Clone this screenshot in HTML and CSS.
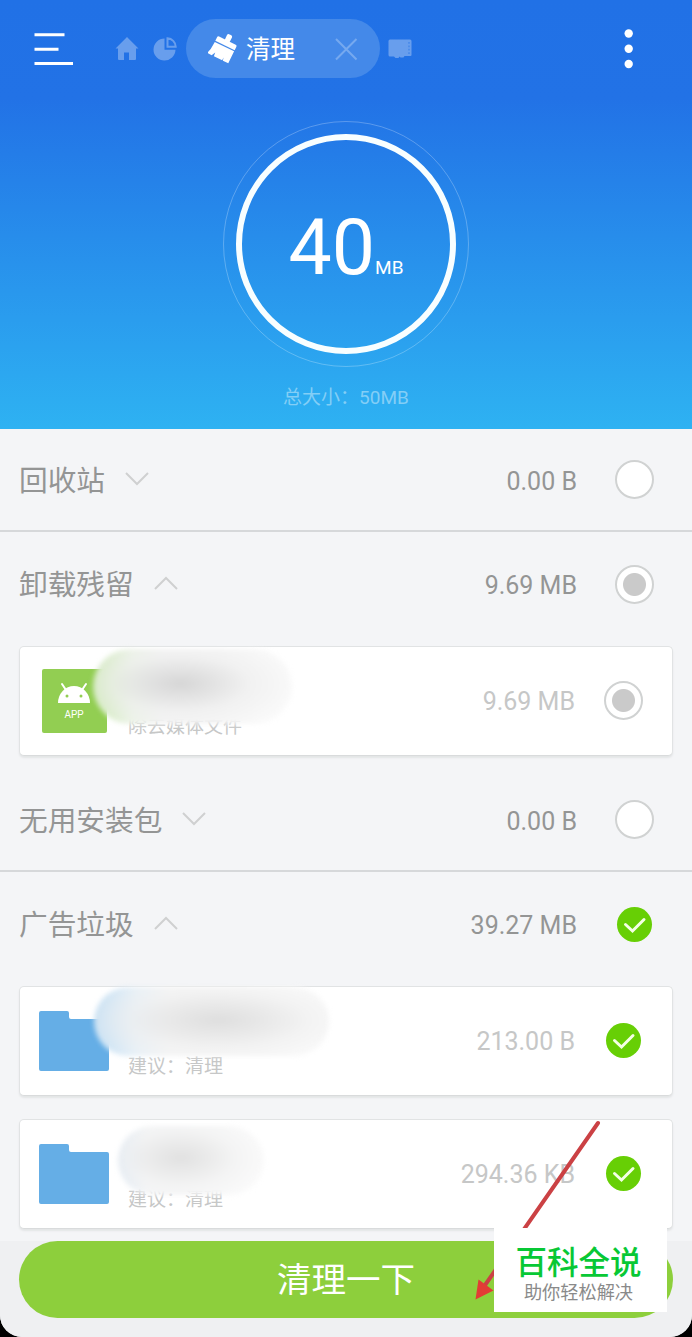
FILE: index.html
```html
<!DOCTYPE html>
<html lang="zh-CN">
<head>
    <meta charset="UTF-8">
    <meta name="viewport" content="width=device-width, initial-scale=1.0">
    <title>清理</title>
    <link rel="stylesheet" href="styles.css">
</head>
<body>
    <div class="app">
        <header class="header">
            <div class="toolbar">
                <svg class="menu-icon" width="40" height="34" viewBox="0 0 40 34">
                    <path d="M.5 2.800h30M.5 17.200h24M.5 31.500h38.500" stroke="#fff" stroke-width="3"/>
                </svg>

                <div class="tabs">
                    <svg class="tab-icon" width="24" height="24" viewBox="0 0 24 24">
                        <path d="M12 0L.5 11.500H3V22q0 1 1 1h5v-7.500h5V23h6q1 0 1-1V11.500h2.500z" fill="currentColor"/>
                    </svg>
                    <svg class="tab-icon" width="24" height="24" viewBox="0 0 24 24">
                        <path d="M11.500 1.500A11 11 0 1 0 22.500 12.800H11.500z" fill="currentColor"/>
                        <path d="M14.500 1.300v8.400h8.200A8.700 8.700 0 0 0 14.500 1.300z" fill="none" stroke="currentColor" stroke-width="2"/>
                    </svg>
                    <div class="tab-active">
                        <svg width="30" height="30" viewBox="0 0 30 30">
                            <g transform="rotate(26 15 15)" fill="#fff">
                                <rect x="12.500" y="-1" width="5.500" height="8" rx="2"/>
                                <path d="M6 5.500h18.500q1.500 0 1.500 1.500v4H4.500V7q0-1.500 1.500-1.500z"/>
                                <path d="M4.500 12.200H26V25.500h-6l-.8-3v3H10l-.5-4-2 4H2.500l1.500-5z"/>
                            </g>
                        </svg>
                        <span class="tab-title">清理</span>
                        <svg class="tab-close" width="24" height="24" viewBox="0 0 24 24">
                            <path d="M2 2l20.500 20.500M22.500 2L2 22.500" stroke="currentColor" stroke-width="2"/>
                        </svg>
                    </div>
                    <svg class="tab-icon" width="24" height="20" viewBox="0 0 24 20">
                        <path d="M2 .5h20q1.500 0 1.500 1.500v14q0 1-1 1h-6l-1 1.500h-3l-1-1-1 1.500h-3l-1.500-1.500H2q-1.500 0-1.500-1.500V2Q.5.500 2 .5z" fill="currentColor"/>
                        <path d="M21 3v12.500" stroke="#4d8dea" stroke-width="2" stroke-dasharray="1.800 1.600"/>
                    </svg>
                </div>

                <svg class="more-icon" width="10" height="40" viewBox="0 0 10 40">
                    <circle cx="4.700" cy="4.500" r="4.200" fill="#fff"/>
                    <circle cx="4.700" cy="19.800" r="4.200" fill="#fff"/>
                    <circle cx="4.700" cy="35" r="4.200" fill="#fff"/>
                </svg>
            </div>

            <div class="ring-outer">
                <div class="ring">
                    <span class="ring-value">40</span><span class="ring-unit">MB</span>
                </div>
            </div>
            <div class="total">总大小：50MB</div>
        </header>

        <main class="list">
            <div class="row row-line">
                <span class="row-title">回收站</span>
                <svg class="arrow" width="24" height="14" viewBox="0 0 24 14"><path d="M1 1l11 11L23 1"/></svg>
                <span class="row-size">0.00 B</span>
                <span class="radio"></span>
            </div>

            <div class="row">
                <span class="row-title">卸载残留</span>
                <svg class="arrow" width="24" height="14" viewBox="0 0 24 14"><path d="M1 13L12 2l11 11"/></svg>
                <span class="row-size">9.69 MB</span>
                <span class="radio radio-part"></span>
            </div>
            <div class="cards">
                <div class="card">
                    <svg class="card-icon" width="70" height="66" viewBox="0 0 70 66">
                        <rect x="3" y="1" width="65" height="64" rx="2" fill="#92ce52"/>
                        <path d="M19 35a16 17 0 0 1 32 0z" fill="#fff"/>
                        <path d="M23 16l4 6M47 16l-4 6" stroke="#fff" stroke-width="2" stroke-linecap="round"/>
                        <circle cx="28" cy="28" r="1.500" fill="#92ce52"/>
                        <circle cx="42" cy="28" r="1.500" fill="#92ce52"/>
                        <text x="35" y="49.500" class="app-label" text-anchor="middle">APP</text>
                    </svg>
                    <span class="card-note">除去媒体文件</span>
                    <span class="row-size">9.69 MB</span>
                    <span class="radio radio-part"></span>
                    <div class="smudge smudge-app"></div>
                </div>
            </div>

            <div class="row row-line">
                <span class="row-title">无用安装包</span>
                <svg class="arrow" width="24" height="14" viewBox="0 0 24 14"><path d="M1 1l11 11L23 1"/></svg>
                <span class="row-size">0.00 B</span>
                <span class="radio"></span>
            </div>

            <div class="row">
                <span class="row-title">广告垃圾</span>
                <svg class="arrow" width="24" height="14" viewBox="0 0 24 14"><path d="M1 13L12 2l11 11"/></svg>
                <span class="row-size">39.27 MB</span>
                <svg class="check" width="39" height="39" viewBox="0 0 39 39"><circle cx="19.500" cy="19.500" r="17.500"/><path d="M10.500 19.500l7 6.500 11.500-11.500"/></svg>
            </div>
            <div class="cards">
                <div class="card">
                    <svg class="card-icon" width="70" height="62" viewBox="0 0 70 62">
                        <path d="M2 1h26q2 0 2 2v4q0 2 2 2h36q2 0 2 2v48q0 2-2 2H2q-2 0-2-2V3q0-2 2-2z" fill="#65aee6"/>
                    </svg>
                    <span class="card-note">建议：清理</span>
                    <span class="row-size">213.00 B</span>
                    <svg class="check" width="39" height="39" viewBox="0 0 39 39"><circle cx="19.500" cy="19.500" r="17.500"/><path d="M10.500 19.500l7 6.500 11.500-11.500"/></svg>
                    <div class="smudge smudge-wide"></div>
                </div>
                <div class="card">
                    <svg class="card-icon" width="70" height="62" viewBox="0 0 70 62">
                        <path d="M2 1h26q2 0 2 2v4q0 2 2 2h36q2 0 2 2v48q0 2-2 2H2q-2 0-2-2V3q0-2 2-2z" fill="#65aee6"/>
                    </svg>
                    <span class="card-note">建议：清理</span>
                    <span class="row-size">294.36 KB</span>
                    <svg class="check" width="39" height="39" viewBox="0 0 39 39"><circle cx="19.500" cy="19.500" r="17.500"/><path d="M10.500 19.500l7 6.500 11.500-11.500"/></svg>
                    <div class="smudge smudge-small"></div>
                </div>
            </div>
        </main>

        <footer class="footer">
            <div class="clean-btn">清理一下</div>
        </footer>

        <svg class="pointer" width="130" height="184" viewBox="0 0 130 184">
            <path d="M127 3L12 168" stroke="#cb4144" stroke-width="4" stroke-linecap="round"/>
            <path d="M4.500 179.500l3-20 15 11z" fill="#e23c35"/>
        </svg>
        <div class="watermark">
            <div class="watermark-title">百科全说</div>
            <div class="watermark-sub">助你轻松解决</div>
        </div>
    </div>
</body>
</html>
```
FILE: styles.css
```css
* {
    box-sizing: border-box;
}

body {
    margin: 0;
    background-color: #000;
    font-family: Roboto, "Noto Sans CJK SC", sans-serif;
}

.app {
    position: relative;
    width: 692px;
    height: 1337px;
    display: flex;
    flex-direction: column;
    background-color: #f4f5f7;
    border-radius: 0 0 22px 22px;
    overflow: hidden;
}

/* header */
.header {
    height: 429px;
    display: flex;
    flex-direction: column;
    align-items: center;
    background: linear-gradient(#2171e6 0, #2272e6 98px, #2eb2f2 100%);
}

.toolbar {
    width: 100%;
    height: 98px;
    display: flex;
    align-items: center;
    padding: 0 58px 0 34px;
}

.tabs {
    display: flex;
    align-items: center;
    margin-left: 41px;
    gap: 14px;
}

.tab-icon {
    color: #689eed;
}

.tab-active {
    width: 194px;
    height: 59px;
    display: flex;
    align-items: center;
    margin: -1px -6px 0 -5px;
    padding: 0 22px;
    border-radius: 30px;
    background-color: #4489e9;
}

.tab-title {
    margin: 3px 0 0 8px;
    font-size: 24.5px;
    line-height: 36px;
    color: #fff;
}

.tab-close {
    margin-left: auto;
    color: #76a9ef;
}

.more-icon {
    margin-left: auto;
}

.ring-outer {
    width: 246px;
    height: 246px;
    margin-top: 23px;
    padding: 12px;
    border: 1px solid rgba(255, 255, 255, 0.25);
    border-radius: 50%;
}

.ring {
    width: 220px;
    height: 220px;
    display: flex;
    justify-content: center;
    align-items: baseline;
    padding-top: 63px;
    border: 6px solid #f8feff;
    border-radius: 50%;
    color: #fff;
}

.ring-value {
    font-size: 77px;
    line-height: 90px;
}

.ring-unit {
    font-size: 19px;
}

.total {
    margin-top: 17px;
    font-size: 19px;
    line-height: 28px;
    color: #83cef6;
}

/* list */
.row {
    height: 104px;
    display: flex;
    align-items: center;
    padding: 0 38px 0 19px;
    color: #949595;
}

.row-line {
    height: 103px;
    border-bottom: 2px solid #d6d8da;
}

.row-title {
    margin-top: 2px;
    font-size: 28.7px;
    line-height: 42px;
}

.arrow {
    margin: -2px 0 0 20px;
    fill: none;
    stroke: #cfd0d1;
    stroke-width: 2;
}

.row-size {
    margin: 3px 0 0 auto;
    font-size: 25px;
}

.radio,
.check {
    flex: none;
    width: 39px;
    height: 39px;
    margin-left: 38px;
}

.radio {
    border: 2px solid #d0d2d2;
    border-radius: 50%;
    background-color: #fff;
}

.radio-part {
    background: radial-gradient(circle, #cacaca 11px, #fff 12px);
}

.check circle {
    fill: #67cf05;
}

.check path {
    fill: none;
    stroke: #f4ffe5;
    stroke-width: 3;
    stroke-linecap: round;
}

.cards {
    display: flex;
    flex-direction: column;
    gap: 23px;
    padding: 10px 19px 13px;
}

.card {
    position: relative;
    height: 110px;
    display: flex;
    align-items: center;
    padding: 0 29px 0 19px;
    border: 1px solid #e1e3e4;
    border-bottom-color: #d9dbdc;
    border-radius: 5px;
    background-color: #fff;
    box-shadow: 0 2px 2px #e3e5e6;
    color: #c6c7c7;
}

.card .row-size {
    margin-top: 1px;
}

.card .radio,
.card .check {
    margin-left: 29px;
    margin-top: -1px;
}

.card-icon {
    flex: none;
}

.app-label {
    font-size: 10px;
    fill: #fff;
}

.card-note {
    margin: 51px 0 0 19px;
    font-size: 19px;
    line-height: 28px;
}

/* blurred file names */
.smudge {
    position: absolute;
    border-radius: 40px;
    filter: blur(2.5px);
}

.smudge-app {
    left: 73px;
    top: 2px;
    width: 199px;
    height: 75px;
    background: radial-gradient(ellipse 125px 50px at 44% 46%, #d6d6d6, rgba(236, 236, 236, 0.6) 55%, rgba(250, 250, 250, 0)),
                linear-gradient(90deg, #cbe9b1 0, #edf5e8 20%, #f6f6f6 35%, #fbfbfb);
}

.smudge-wide {
    left: 74px;
    top: 0;
    width: 235px;
    height: 69px;
    background: radial-gradient(ellipse 150px 46px at 53% 48%, #dedede, rgba(238, 238, 238, 0.6) 60%, rgba(250, 250, 250, 0)),
                linear-gradient(90deg, #c1def4 0, #e8f1f8 18%, #f7f7f7 32%, #fbfbfb);
}

.smudge-small {
    left: 98px;
    top: 6px;
    width: 146px;
    height: 69px;
    background: radial-gradient(ellipse 90px 46px at 43% 46%, #e1e1e1, rgba(240, 240, 240, 0.6) 60%, rgba(250, 250, 250, 0)),
                linear-gradient(90deg, #dfeaf5 0, #f6f7f8 20%, #fbfbfb);
}

/* bottom bar */
.footer {
    position: absolute;
    left: 0;
    right: 0;
    bottom: 0;
    height: 96px;
    padding: 0 19px;
    background-color: #eff0f2;
}

.clean-btn {
    height: 77px;
    border-radius: 39px;
    background-color: #8dcf3c;
    font-size: 34.5px;
    line-height: 79px;
    text-align: center;
    color: #fff;
}

.pointer {
    position: absolute;
    left: 471px;
    top: 1120px;
}

.watermark {
    position: absolute;
    left: 494px;
    top: 1228px;
    width: 173px;
    height: 84px;
    padding: 13px 4px 0 0;
    background-color: #fff;
    text-align: center;
}

.watermark-title {
    font-size: 31.5px;
    font-weight: 500;
    line-height: 38px;
    font-family: "Noto Sans CJK SC", sans-serif;
    color: #08c835;
}

.watermark-sub {
    margin-top: 1px;
    font-size: 18.2px;
    line-height: 26px;
    color: #8a8a8a;
}
```
